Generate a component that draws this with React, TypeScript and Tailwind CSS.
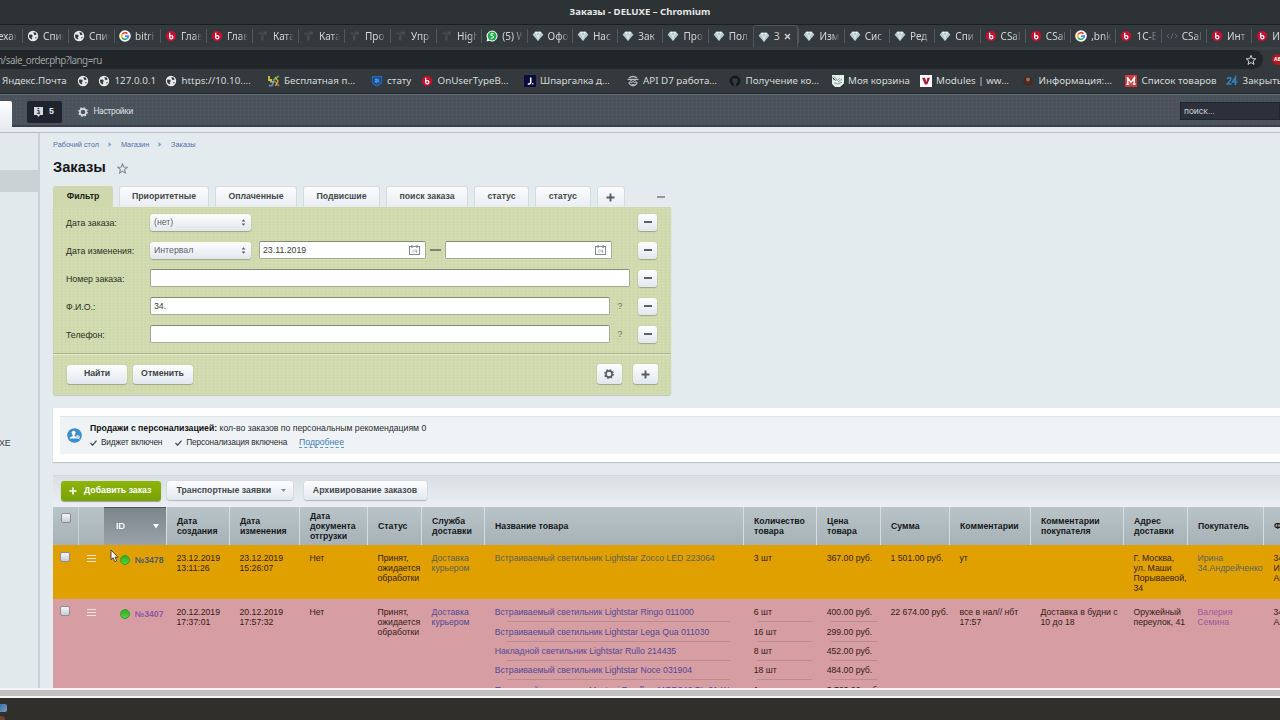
import React from "react";

type IconName =
  | "none" | "globe" | "google" | "bitrix" | "faint" | "whatsapp" | "gem" | "code"
  | "joomla" | "shield" | "j" | "agent" | "github" | "cart" | "v" | "dot" | "m" | "24";

function Icon({ name, size = 12 }: { name: IconName; size?: number }) {
  const p = { width: size, height: size, viewBox: "0 0 12 12", className: "shrink-0" };
  switch (name) {
    case "globe":
      return (
        <svg {...p}>
          <circle cx="6" cy="6" r="5.2" fill="#e8eaeb" />
          <path d="M2 4.8 L4.8 4.6 L6 6.2 L4.6 7 L5.4 8.6 L4.4 9.4 L2.2 7.4 Z" fill="#33393c" />
          <path d="M6.2 2.2 L8.6 2.6 L9.6 4.6 L7.6 5.2 L7 4.2 Z" fill="#33393c" />
          <path d="M8 7.4 L9.8 6.8 L8.8 8.8 Z" fill="#33393c" />
        </svg>
      );
    case "google":
      return (
        <svg {...p}>
          <circle cx="6" cy="6" r="5.8" fill="#fff" />
          <g fill="none" strokeWidth="1.6">
            <path d="M3.1 4.4 A3.3 3.3 0 0 1 8.4 3.7" stroke="#ea4335" />
            <path d="M3.1 7.6 A3.3 3.3 0 0 1 3.1 4.4" stroke="#fbbc05" />
            <path d="M8.2 8.5 A3.3 3.3 0 0 1 3.1 7.6" stroke="#34a853" />
            <path d="M6 6.1 H9.3 A3.3 3.3 0 0 1 8.2 8.5" stroke="#4285f4" />
          </g>
        </svg>
      );
    case "bitrix":
      return (
        <svg {...p}>
          <circle cx="6" cy="6" r="5.2" fill="#c3112f" />
          <path d="M4.7 2.8 V7.4 A1.6 1.6 0 1 0 6.3 5.6 H5" fill="none" stroke="#fff" strokeWidth="1.3" />
        </svg>
      );
    case "faint":
      return (
        <svg {...p}>
          <path d="M1.5 2.5 H4.5 V4.5 H1.5 Z M5.5 1.5 H10 V4.5 H6.5 V10.5 H4 V5.5 H5.5 Z" fill="#484d50" />
        </svg>
      );
    case "whatsapp":
      return (
        <svg {...p}>
          <path d="M0.5 11.5 L1.3 8.8 A5.5 5.5 0 1 1 3.3 10.8 Z" fill="#fff" />
          <circle cx="6.1" cy="6" r="4.5" fill="#1fae4c" />
          <path d="M7.7 3.7 H5 V5.6 H6.2 A1.3 1.3 0 0 1 6.2 8.2 H4.7" fill="none" stroke="#fff" strokeWidth="1" />
        </svg>
      );
    case "gem":
      return (
        <svg {...p}>
          <path d="M3 1.8 H9 L11.4 4.8 L6 11 L0.6 4.8 Z" fill="#b4c8ce" />
          <path d="M3 1.8 L4 4.8 L6 1.8 L8 4.8 L9 1.8 Z" fill="#eef6f8" />
          <path d="M4 4.8 L6 11 L8 4.8 Z" fill="#d3e1e5" />
        </svg>
      );
    case "code":
      return (
        <svg {...p}>
          <path d="M3.2 3.8 L0.8 6 L3.2 8.2 M8.8 3.8 L11.2 6 L8.8 8.2 M7 3.2 L5 8.8" fill="none" stroke="#56687a" strokeWidth="1" />
        </svg>
      );
    case "joomla":
      return (
        <svg {...p} fill="none" strokeWidth="1.8">
          <path d="M1 1 V5 H4" stroke="#d6bf3a" />
          <path d="M5 5.5 L10.8 1" stroke="#62a554" />
          <path d="M6.6 6 L11 11" stroke="#c9683c" />
          <path d="M0.8 10.6 H4 L5.6 7" stroke="#5b8fb9" />
          <path d="M7 2 L10 6 L7.5 11" stroke="#d6bf3a" strokeWidth="1.2" />
          <path d="M2 6.8 H6" stroke="#c8cdb0" strokeWidth="1.2" />
        </svg>
      );
    case "shield":
      return (
        <svg {...p}>
          <path d="M0.8 1 H11.2 V6.5 Q11 9.5 6 11.4 Q1 9.5 0.8 6.5 Z" fill="#2167b5" />
          <path d="M2.6 3 H9.4 V6.3 Q9 8.3 6 9.4 Q3 8.3 2.6 6.3 Z" fill="none" stroke="#173f78" />
          <path d="M4 4.2 H6 L4.4 7 H6.3 M7 4.2 V7" fill="none" stroke="#8db8e8" strokeWidth=".7" />
        </svg>
      );
    case "j":
      return (
        <svg {...p}>
          <rect width="12" height="12" fill="#0b0d3e" />
          <path d="M6.7 2.6 V7.6 Q6.6 9 5 9 H3.8" fill="none" stroke="#fff" strokeWidth="1.5" />
          <rect x="8.2" y="8" width="1.2" height="1.4" fill="#fff" />
        </svg>
      );
    case "agent":
      return (
        <svg {...p} fill="none" stroke="#b9bdbf">
          <path d="M2 3 Q6 0 10 3" strokeWidth="1.5" />
          <path d="M0.6 4.4 H11.4" strokeWidth="1.2" />
          <circle cx="4.2" cy="6.6" r="1.2" />
          <circle cx="7.8" cy="6.6" r="1.2" />
          <path d="M2.2 7 V8.6 Q6 13 9.8 8.6 V7" strokeWidth="1.2" />
          <path d="M4.6 9.6 H7.4" strokeWidth="1" />
        </svg>
      );
    case "github":
      return (
        <svg {...p}>
          <circle cx="6" cy="6" r="5.4" fill="#15181b" />
          <path d="M3.4 3 L4.7 3.5 H7.3 L8.6 3 V7 Q8.4 8 7.2 8.2 V11 H4.8 V8.2 Q3.5 8 3.4 7 Z" fill="#353b3e" />
        </svg>
      );
    case "cart":
      return (
        <svg {...p}>
          <rect width="12" height="12" fill="#e4eeea" />
          <path d="M2 1.4 L5.4 5.4 L8 3 M6 7 L10 4 M2 8 L6 9 L10 7" stroke="#86a39b" fill="none" strokeWidth="1" />
          <path d="M0 1.5 L4.6 6 L1.4 4.6 Z M12 8.5 V12 H8 Z M0 9 L3 12 H0 Z" fill="#2a2f2e" />
        </svg>
      );
    case "v":
      return (
        <svg {...p}>
          <rect width="12" height="12" fill="#fff" />
          <path d="M2 2.8 H5 L6.3 7 L7.4 2.8 H10 L7.3 9.6 H4.9 Z" fill="#a81b35" />
        </svg>
      );
    case "dot":
      return (
        <svg {...p}>
          <circle cx="6" cy="6" r="4.8" fill="#4a2a20" />
          <circle cx="6" cy="4.6" r="2" fill="#93705e" />
        </svg>
      );
    case "m":
      return (
        <svg {...p}>
          <rect width="12" height="12" fill="#cf3a3c" />
          <path d="M1.4 9.2 H4.2 M2.8 9.2 V3 H1.6 M2.8 3 L6 7.4 L9.2 3 V9.2 M9.2 3 H10.4 M7.8 9.2 H10.6" stroke="#fff" strokeWidth="1.4" fill="none" />
        </svg>
      );
    case "24":
      return (
        <svg {...p} fill="none" stroke="#2f7fb6" strokeWidth="1.7">
          <path d="M1 3.8 Q3 1.6 4.8 3.2 Q5.4 4.8 1.2 9 H5.6" />
          <path d="M9.4 10 V2.4 L6.6 7 H11.6" />
        </svg>
      );
    default:
      return null;
  }
}

const tabs: [IconName, string][] = [
  ["globe", "Спис"], ["globe", "Спис"], ["google", "bitri"], ["bitrix", "Глав"], ["bitrix", "Глав"],
  ["faint", "Ката"], ["faint", "Ката"], ["faint", "Про"], ["faint", "Упр"],
  ["faint", "High"], ["whatsapp", "(5) W"], ["gem", "Офо"], ["gem", "Нас"], ["gem", "Зак"],
  ["gem", "Про"], ["gem", "Пол"], ["gem", "З"], ["gem", "Изм"], ["gem", "Сис"], ["gem", "Ред"],
  ["gem", "Спи"], ["bitrix", "CSal"], ["bitrix", "CSal"], ["google", ",bnk"], ["bitrix", "1С-Б"],
  ["code", "CSal"], ["bitrix", "Инт"], ["bitrix", "Инт"],
];

function Tab({ icon, text, active, wide }: { icon: IconName; text: string; active: boolean; wide: boolean }) {
  return (
    <div className={(wide ? "w-[46px] " : "w-[45.3px] ") + "flex h-full shrink-0 items-center"}>
      <div
        className={
          active
            ? "flex h-full w-full items-center rounded-t-[3px] border border-b-0 border-[#50575a] bg-[#353b3e] pl-[4px]"
            : "flex h-[14px] w-full items-center border-l border-[#53595c] pl-[4px]"
        }
      >
        <Icon name={icon} />
        {active ? (
          <>
            <span className="ml-[4px] text-[10px] text-[#c6c9ca]">{text}</span>
            <svg className="ml-[4px]" width="7" height="7" viewBox="0 0 7 7" stroke="#d5d8d9" strokeWidth="1.3">
              <path d="M1 1 L6 6 M6 1 L1 6" />
            </svg>
          </>
        ) : (
          <span className="ml-[4px] w-[21px] overflow-hidden text-[10px] whitespace-nowrap text-[#d3d6d7] [mask-image:linear-gradient(to_right,black_60%,transparent)]">
            {text}
          </span>
        )}
      </div>
    </div>
  );
}

const bookmarks: [IconName, string, string][] = [
  ["none", "Яндекс.Почта", "w-[74.5px]"],
  ["globe", "", "w-[21.5px]"],
  ["globe", "127.0.0.1", "w-[67px]"],
  ["globe", "https://10.10.…", "w-[102.5px]"],
  ["joomla", "Бесплатная п…", "w-[103px]"],
  ["shield", "стату", "w-[50.5px]"],
  ["bitrix", "OnUserTypeB…", "w-[102.5px]"],
  ["j", "Шпаргалка д…", "w-[103px]"],
  ["agent", "API D7 работа…", "w-[102.5px]"],
  ["github", "Получение ко…", "w-[102.5px]"],
  ["cart", "Моя корзина", "w-[88px]"],
  ["v", "Modules | ww…", "w-[102.5px]"],
  ["dot", "Информация:…", "w-[103px]"],
  ["m", "Список товаров", "w-[101px]"],
  ["24", "Закрыть", "w-[80px]"],
];

function Browser() {
  return (
    <div className="font-['Noto_Sans',sans-serif]">
      <div className="flex h-[24px] items-center justify-center bg-[#2d3235] pt-px text-[9.6px] font-bold text-[#e4e6e6]">
        Заказы - DELUXE – Chromium
      </div>
      <div className="flex h-[23px] overflow-hidden border-t border-[#1d2022] bg-[#33393c]">
        <div className="flex w-[22px] shrink-0 items-center overflow-hidden text-[10px] text-[#d3d6d7]">
          <span className="-ml-[2px] w-[19px] overflow-hidden whitespace-nowrap [mask-image:linear-gradient(to_right,black_60%,transparent)]">ехан</span>
        </div>
        {tabs.map(([icon, text], i) => (
          <Tab key={i} icon={icon} text={text} active={i === 16} wide={i < 9} />
        ))}
      </div>
      <div className="flex h-[22px] items-center bg-[#3a4144] pt-[3px]">
        <div className="flex h-[19px] grow items-center bg-[#33393c]">
          <div className="flex h-[19px] w-[1263px] shrink-0 items-center justify-between rounded-r-full bg-[#222628] pr-[6px]">
            <span className="-ml-[3px] pt-px text-[9.9px] tracking-[-0.54px] text-[#9da1a3]">n/sale_order.php?lang=ru</span>
            <svg width="12" height="12" viewBox="0 0 12 12" fill="none" stroke="#d0d3d4" strokeWidth="1">
              <path d="M6 1.4 L7.3 4.6 L10.8 4.8 L8.1 7 L9 10.4 L6 8.5 L3 10.4 L3.9 7 L1.2 4.8 L4.7 4.6 Z" />
            </svg>
          </div>
          <div className="ml-[9px] flex h-[11px] w-[11px] shrink-0 items-center rounded-full bg-[#b3161b] pl-[2px] text-[5px] font-bold text-white">AB</div>
        </div>
      </div>
      <div className="flex h-[25px] items-center overflow-hidden border-b border-[#1f2325] bg-[#33393c] pl-[2px]">
        {bookmarks.map(([icon, text, width], i) => (
          <div key={i} className={width + " flex shrink-0 items-center gap-[4.5px] text-[9.8px] whitespace-nowrap text-[#d6d9da]"}>
            <Icon name={icon} />
            {text && <span>{text}</span>}
          </div>
        ))}
      </div>
    </div>
  );
}

function Gear({ className, size }: { className: string; size: number }) {
  return (
    <svg className={className} width={size} height={size} viewBox="0 0 10 10" fill="none" stroke="currentColor">
      <circle cx="5" cy="5" r="3.1" strokeWidth="1.7" />
      <circle cx="5" cy="5" r="4.3" strokeWidth="1.2" strokeDasharray="1.7 1.68" />
    </svg>
  );
}

function AdminHeader() {
  return (
    <div className="flex h-[33px] border-t border-[#69717a] bg-[#49515b] bg-[repeating-linear-gradient(90deg,#ffffff05_0_1px,transparent_1px_4px),repeating-linear-gradient(0deg,#ffffff05_0_1px,transparent_1px_4px)]">
      <div className="mt-[6px] w-[12px] rounded-tr-[2px] bg-linear-to-b from-white to-[#e6ecf1]" />
      <div className="flex grow border-b-2 border-[#3a404b] pt-[6px]">
        <div className="ml-[14.5px] flex h-[21.5px] w-[35px] items-center justify-center gap-[6px] rounded-[2px] bg-[#1e242f] text-[8.7px] font-bold text-[#e6e8ea]">
          <svg width="9" height="10" viewBox="0 0 9 10">
            <path d="M0 0 H9 V8 H6 L4.5 10 L3 8 H0 Z" fill="#d5d8dc" />
            <path d="M3.6 1.4 H5.2 M3.4 3.4 H5 V6 M3.2 6.3 H6" stroke="#1e242f" fill="none" />
          </svg>
          5
        </div>
        <Gear className="mt-[5.5px] ml-[16px] text-[#d5d9dd]" size={10} />
        <span className="mt-[5px] ml-[6px] font-[Roboto,sans-serif] text-[8.4px] leading-[11px] tracking-[-0.35px] text-[#dfe2e5]">Настройки</span>
        <div className="mt-[1px] ml-auto flex h-[18px] w-[100px] items-center border border-[#20252e] bg-[#2b303b] pt-px pl-[3px] font-[Roboto,sans-serif] text-[8.6px] text-[#cdd0d5]">поиск...</div>
      </div>
    </div>
  );
}

const filterTabs: [string, string][] = [
  ["Приоритетные", "w-[90px]"],
  ["Оплаченные", "w-[82px]"],
  ["Подвисшие", "w-[77px]"],
  ["поиск заказа", "w-[82px]"],
  ["статус", "w-[55px]"],
  ["статус", "w-[55.5px]"],
];

const btn = "rounded-[3px] bg-linear-to-b from-[#fdfdfe] to-[#e3e8ee] shadow-[0_1px_1px_#00000038,0_0_1px_#00000040] ";

function Plus({ size = 9, color = "#565c66" }: { size?: number; color?: string }) {
  return (
    <svg width={size} height={size} viewBox="0 0 9 9" stroke={color} strokeWidth="1.9">
      <path d="M4.5 0.5 V8.5 M0.5 4.5 H8.5" />
    </svg>
  );
}

function Select({ text }: { text: string }) {
  return (
    <div className={btn + "flex h-[17px] w-[100.5px] items-center justify-between rounded-[2px] pt-px pr-[5px] pl-[4px] text-[#5d636b]"}>
      {text}
      <svg width="5" height="7" viewBox="0 0 5 7" fill="#565d69">
        <path d="M2.5 0.3 L4.4 2.4 H0.6 Z M2.5 6.7 L4.4 4.6 H0.6 Z" />
      </svg>
    </div>
  );
}

function Field({ width, text, calendar }: { width: string; text?: string; calendar?: boolean }) {
  return (
    <div className={width + " flex h-[18px] items-center justify-between rounded-[2px] border border-[#a4ab98] border-t-[#868b7c] bg-white pr-[5px] pl-[3px] text-[#3c3c3c]"}>
      <span className="pt-px">{text}</span>
      {calendar && (
        <svg width="11" height="10" viewBox="0 0 11 10" fill="none" stroke="#848a93" strokeWidth="1">
          <rect x="0.5" y="1.5" width="10" height="8" />
          <path d="M3 0 V3 M8 0 V3 M3 1.5 H8" strokeWidth="1.2" />
          <path d="M4 4.5 V7.8 M6 4.5 V6.5 H8 M7.5 4.5 V7.8" strokeWidth=".6" />
        </svg>
      )}
    </div>
  );
}

function FilterRow({ label, children }: { label: string; children: React.ReactNode }) {
  return (
    <div className="flex h-[28px] items-center">
      <span className="w-[84px] pt-[3px] text-[#2b2e22]">{label}</span>
      <div className="flex w-[488px] items-center">{children}</div>
      <div className={btn + "flex h-[17px] w-[19px] items-center justify-center"}>
        <div className="h-[2px] w-[8px] bg-[#5a606b]" />
      </div>
    </div>
  );
}

function Filter() {
  return (
    <div className="mt-[10px] w-[618px] text-[8.75px]">
      <div className="flex h-[21px] gap-[6px] font-bold text-[#454a50]">
        <div className="flex w-[60px] items-center justify-center rounded-t-[3px] bg-[#ced8ac] text-[#1c1f14]">Фильтр</div>
        {filterTabs.map(([text, w], i) => (
          <div key={i} className={w + " flex items-center justify-center rounded-t-[3px] border border-b-0 border-[#d5dce0] bg-linear-to-b from-[#fbfcfd] to-[#e9edf2]"}>
            {text}
          </div>
        ))}
        <div className="flex w-[28px] items-center justify-center rounded-t-[3px] border border-b-0 border-[#d5dce0] bg-linear-to-b from-[#fbfcfd] to-[#e9edf2]">
          <Plus />
        </div>
        <div className="mt-[10px] ml-[26px] h-[1.5px] w-[8px] bg-[#8f989f]" />
      </div>
      <div className="h-[188px] rounded-b-[3px] bg-[#d0daae] bg-[repeating-linear-gradient(0deg,#ffffff14_0_1px,transparent_1px_3px),repeating-linear-gradient(90deg,#a8b67d1c_0_1px,transparent_1px_4px)] shadow-[0_1px_1px_#8a907a66]">
        <div className="h-[147px] border-b border-[#a9b28b] pt-[1px] pl-[13px]">
          <FilterRow label="Дата заказа:"><Select text="(нет)" /></FilterRow>
          <FilterRow label="Дата изменения:">
            <Select text="Интервал" />
            <div className="w-[8.5px]" />
            <Field width="w-[167px]" text="23.11.2019" calendar />
            <div className="mx-[4px] h-[1.5px] w-[11px] bg-[#7e8470]" />
            <Field width="w-[167px]" calendar />
          </FilterRow>
          <FilterRow label="Номер заказа:"><Field width="w-[480px]" /></FilterRow>
          <FilterRow label="Ф.И.О.:"><Field width="w-[460px]" text="34." /><span className="ml-[7.5px] pt-px text-[#696e5c]">?</span></FilterRow>
          <FilterRow label="Телефон:"><Field width="w-[460px]" /><span className="ml-[7.5px] pt-px text-[#696e5c]">?</span></FilterRow>
        </div>
        <div className="flex h-[39px] items-center border-t border-[#e0e8c4] pl-[14px] font-bold text-[#3f444c]">
          <div className={btn + "flex h-[19px] w-[60px] items-center justify-center"}>Найти</div>
          <div className={btn + "ml-[5.5px] flex h-[19px] w-[60px] items-center justify-center"}>Отменить</div>
          <div className={btn + "ml-[404px] flex h-[20px] w-[25px] items-center justify-center"}><Gear className="text-[#565c66]" size={10} /></div>
          <div className={btn + "ml-[11px] flex h-[20px] w-[25px] items-center justify-center"}><Plus /></div>
        </div>
      </div>
    </div>
  );
}

function Check() {
  return (
    <svg className="mr-[4px]" width="7" height="6" viewBox="0 0 7 6" fill="none" stroke="#3f464c" strokeWidth="1.2">
      <path d="M0.5 3 L2.6 5.2 L6.5 0.6" />
    </svg>
  );
}

function Personalization() {
  return (
    <div className="mt-[13px] h-[54px] bg-white pt-[8px] pl-[7px] text-[8.7px] text-[#2a2d30] shadow-[0_1px_1px_#00000028]">
      <div className="flex h-[38px] items-center border-t border-[#dde4e8] bg-[#eff3f6] pl-[7px]">
        <svg width="15" height="15" viewBox="0 0 15 15">
          <circle cx="7.5" cy="7.5" r="7.3" fill="#3a8fcb" />
          <circle cx="6.6" cy="4.8" r="2" fill="#fff" />
          <path d="M2.6 10.6 Q3 8.6 5.6 8.2 V6 H7.6 V8.2 Q9.6 8.6 10 10.6 Z" fill="#fff" />
          <circle cx="11" cy="9" r="1.3" fill="none" stroke="#fff" strokeWidth=".9" />
          <path d="M9.4 7.6 L12.6 11.4" stroke="#fff" strokeWidth=".7" />
        </svg>
        <div className="ml-[8px] flex flex-col gap-[3px] leading-[11px]">
          <div className="tracking-[-0.015px]"><b className="text-[#111]">Продажи с персонализацией:</b> кол-во заказов по персональным рекомендациям 0</div>
          <div className="flex items-center text-[8.3px] tracking-[-0.16px]">
            <Check />Виджет включен
            <span className="w-[13px]" />
            <Check />Персонализация включена
            <span className="ml-[12px] border-b border-dashed border-[#5f93c2] text-[8.67px] leading-[10px] tracking-normal text-[#3d79b4]">Подробнее</span>
          </div>
        </div>
      </div>
    </div>
  );
}

const cols = "grid grid-cols-[26px_25px_62px_63px_70px_68px_54px_63px_259px_73px_64px_69px_81px_93px_64px_76px_60px] ";

const headers = [
  "Дата\nсоздания", "Дата\nизменения", "Дата\nдокумента\nотгрузки", "Статус", "Служба\nдоставки", "Название товара",
  "Количество\nтовара", "Цена\nтовара", "Сумма", "Комментарии", "Комментарии\nпокупателя", "Адрес\nдоставки", "Покупатель", "Ф",
];

type Order = {
  id: string; color: string; idColor: string; link: string; buyerColor: string; created: string; changed: string;
  items: [string, string, string][]; sum: string; comment: string; buyerComment: string;
  address: string; buyer: string; extra: string; height: string;
};

const orders: Order[] = [
  {
    id: "№3478", color: "bg-[#e0a100]", idColor: "text-[#4c5a68]", link: "text-[#5d6052]", buyerColor: "text-[#5a6460]",
    created: "23.12.2019\n13:11:26", changed: "23.12.2019\n15:26:07",
    items: [["Встраиваемый светильник Lightstar Zocco LED 223064", "3 шт", "367.00 руб."]],
    sum: "1 501.00 руб.", comment: "ут", buyerComment: "", address: "Г. Москва,\nул. Маши\nПорываевой,\n34",
    buyer: "Ирина\n34.Андрейченко", extra: "34\nИр\nАн", height: "h-[54.3px]",
  },
  {
    id: "№3407", color: "bg-[#d69da2]", idColor: "text-[#9058a0]", link: "text-[#514a97]", buyerColor: "text-[#9e5a9e]",
    created: "20.12.2019\n17:37:01", changed: "20.12.2019\n17:57:32",
    items: [
      ["Встраиваемый светильник Lightstar Ringo 011000", "6 шт", "400.00 руб."],
      ["Встраиваемый светильник Lightstar Lega Qua 011030", "16 шт", "299.00 руб."],
      ["Накладной светильник Lightstar Rullo 214435", "8 шт", "452.00 руб."],
      ["Встраиваемый светильник Lightstar Noce 031904", "18 шт", "484.00 руб."],
      ["Подвесной светильник Maytoni Freeflow MOD346 PL-01-W", "1 шт", "3 763.00 руб."],
    ],
    sum: "22 674.00 руб.", comment: "все в нал// нбт\n17:57", buyerComment: "Доставка в будни с\n10 до 18",
    address: "Оружейный\nпереулок, 41", buyer: "Валерия\nСемина", extra: "34\nАл", height: "h-[89px]",
  },
];

function CheckBox() {
  return <div className="h-[10px] w-[10px] rounded-[2px] border border-[#8b8e96] bg-linear-to-b from-[#f6f7f9] to-[#c9ccd4]" />;
}

function Items({ list, index, line, color }: { list: Order["items"]; index: 0 | 1 | 2; line: string; color: string }) {
  return (
    <div className={"pl-[10.7px] whitespace-nowrap " + color}>
      {list.map((item, i) => (
        <div key={i} className="h-[19.4px]">
          <div>{item[index]}</div>
          {i < list.length - 1 && <div className={line + " mt-[4px] h-px bg-[#bb8b92]"} />}
        </div>
      ))}
    </div>
  );
}

function Row({ o }: { o: Order }) {
  const cell = "pl-[10.5px] whitespace-pre";
  return (
    <div className={cols + o.color + " " + o.height + " overflow-hidden pt-[8px] text-[8.7px] leading-[10px] text-[#352018]"}>
      <div className="-mt-px pl-[7px]"><CheckBox /></div>
      <div className="pt-[1.5px] pl-[8px]">
        <div className="flex w-[9px] flex-col gap-[2px]">
          <div className="h-px bg-[#eee3d4]" /><div className="h-px bg-[#eee3d4]" /><div className="h-px bg-[#eee3d4]" />
        </div>
      </div>
      <div className={"flex items-start pt-[2px] pl-[15.5px] font-bold whitespace-nowrap " + o.idColor}>
        <div className="-mt-[0.5px] h-[10px] w-[10px] shrink-0 rounded-full border border-[#3d9a28] bg-linear-to-b from-[#2fae2c] to-[#52cf3a]" />
        <span className="ml-[5px]">{o.id}</span>
      </div>
      <div className={cell}>{o.created}</div>
      <div className={cell}>{o.changed}</div>
      <div className={cell}>Нет</div>
      <div className={cell}>{"Принят,\nожидается\nобработки"}</div>
      <div className={cell + " " + o.link}>{"Доставка\nкурьером"}</div>
      <Items list={o.items} index={0} line="ml-[12px] w-[223px]" color={o.link} />
      <Items list={o.items} index={1} line="ml-[3.5px] w-[55px]" color="" />
      <Items list={o.items} index={2} line="ml-[4.5px] w-[46px]" color="" />
      <div className={cell}>{o.sum}</div>
      <div className={cell}>{o.comment}</div>
      <div className={cell}>{o.buyerComment}</div>
      <div className={cell}>{o.address}</div>
      <div className={cell + " " + o.buyerColor}>{o.buyer}</div>
      <div className={cell}>{o.extra}</div>
    </div>
  );
}

function Orders() {
  return (
    <div className="mt-[13px] border-t border-[#d3dadf]">
      <div className="flex h-[31px] items-center bg-linear-to-b from-[#d9dfe3] to-[#ebeff5] pb-[2px] pl-[8px] text-[8.72px] font-bold text-[#454a52]">
        <div className="flex h-[20px] w-[100px] items-center rounded-[3px] bg-linear-to-b from-[#8fb50b] to-[#77a105] pl-[8px] text-white shadow-[0_1px_1px_#00000055]">
          <Plus size={8} color="#fff" />
          <span className="ml-[7px]">Добавить заказ</span>
        </div>
        <div className={btn + "ml-[5.5px] flex h-[19px] w-[126px] items-center justify-between pr-[7px] pl-[10px]"}>
          Транспортные заявки
          <svg width="5" height="3" viewBox="0 0 5 3" fill="#8b9098"><path d="M0 0 H5 L2.5 3 Z" /></svg>
        </div>
        <div className={btn + "ml-[11px] flex h-[19px] w-[123px] items-center justify-center"}>Архивирование заказов</div>
      </div>
      <div className={cols + "h-[38px] bg-linear-to-b from-[#b9c4c9] to-[#a6b2b7] text-[8.72px] leading-[10px] font-bold text-[#16191b]"}>
        <div className="border-r border-[#c9d2d6] pt-[6px] pl-[8px]"><CheckBox /></div>
        <div />
        <div className="flex items-center justify-between border-t border-[#4f565c] bg-linear-to-b from-[#7c858b] to-[#99a3a9] pr-[7px] pb-px pl-[12px] text-white">
          <span className="font-normal [text-shadow:0_0_0.5px_#fff]">ID</span>
          <svg width="6" height="5" viewBox="0 0 6 5" fill="#fff"><path d="M0 0 H6 L3 4.6 Z" /></svg>
        </div>
        {headers.map((h, i) => (
          <div key={i} className="flex items-center border-l border-[#d5dde0] pl-[10px] whitespace-pre">{h}</div>
        ))}
      </div>
      {orders.map((o) => <Row key={o.id} o={o} />)}
    </div>
  );
}

function Crumb({ text, last }: { text: string; last?: boolean }) {
  return (
    <>
      <span>{text}</span>
      {!last && <svg width="4" height="5" viewBox="0 0 4 5" fill="#8da2c0"><path d="M0.5 0 L3.5 2.5 L0.5 5 Z" /></svg>}
    </>
  );
}

export default function App() {
  return (
    <div className="relative flex h-[720px] w-[1280px] flex-col overflow-hidden bg-[#302f2c] font-['Liberation_Sans',Arial,sans-serif]">
      <Browser />
      <AdminHeader />
      <div className="h-[6px] shrink-0 border-b border-[#b4bec7] bg-[#e4eaef]" />
      <div className="flex h-[555px] shrink-0 overflow-hidden bg-[#e3ebef]">
        <div className="w-[40px] shrink-0 border-r-2 border-[#c9d2d8] bg-[#e1e9ed]">
          <div className="mt-[37px] h-[22px] bg-[#cbd2d6]" />
          <div className="-ml-[1px] mt-[246px] text-[8.8px] leading-[11px] text-[#3a3f44]">XE</div>
        </div>
        <div className="w-[1280px] shrink-0 pl-[13px]">
          <div className="mt-[6px] flex h-[11px] w-max items-center gap-[8.9px] text-[7.35px] text-[#5470a3]">
            <Crumb text="Рабочий стол" /><Crumb text="Магазин" /><Crumb text="Заказы" last />
          </div>
          <div className="mt-[8px] flex h-[18px] items-center text-[14.7px] font-bold text-[#15171a]">
            Заказы
            <svg className="mt-[2px] ml-[11.5px]" width="11" height="11" viewBox="0 0 12 12" fill="none" stroke="#7d868d" strokeWidth="1.1">
              <path d="M6 0.9 L7.4 4.5 L11.2 4.7 L8.3 7.1 L9.2 11 L6 8.9 L2.8 11 L3.7 7.1 L0.8 4.7 L4.6 4.5 Z" />
            </svg>
          </div>
          <Filter />
          <Personalization />
          <Orders />
        </div>
      </div>
      <div className="h-[10px] shrink-0 border-y-2 border-[#f4f4f4] bg-[#c0c0c0]" />
      <div className="flex grow flex-col overflow-hidden bg-[#302f2c] pt-[6px]">
        <div className="h-[8px] w-[7px] rounded-r-[2px] bg-linear-to-br from-[#3a6ea8] to-[#7aa0bb]" />
        <div className="mt-[4px] h-[4px] w-[5px] rounded-tr-full bg-[#6e4530]" />
      </div>
      <svg className="absolute top-[549px] left-[110px]" width="9" height="14" viewBox="0 0 9 14">
        <path d="M1 1 V10.6 L3.2 8.8 L4.8 12.6 L6.6 11.8 L5 8.2 H8 Z" fill="#fff" stroke="#333" strokeWidth=".9" />
      </svg>
    </div>
  );
}
